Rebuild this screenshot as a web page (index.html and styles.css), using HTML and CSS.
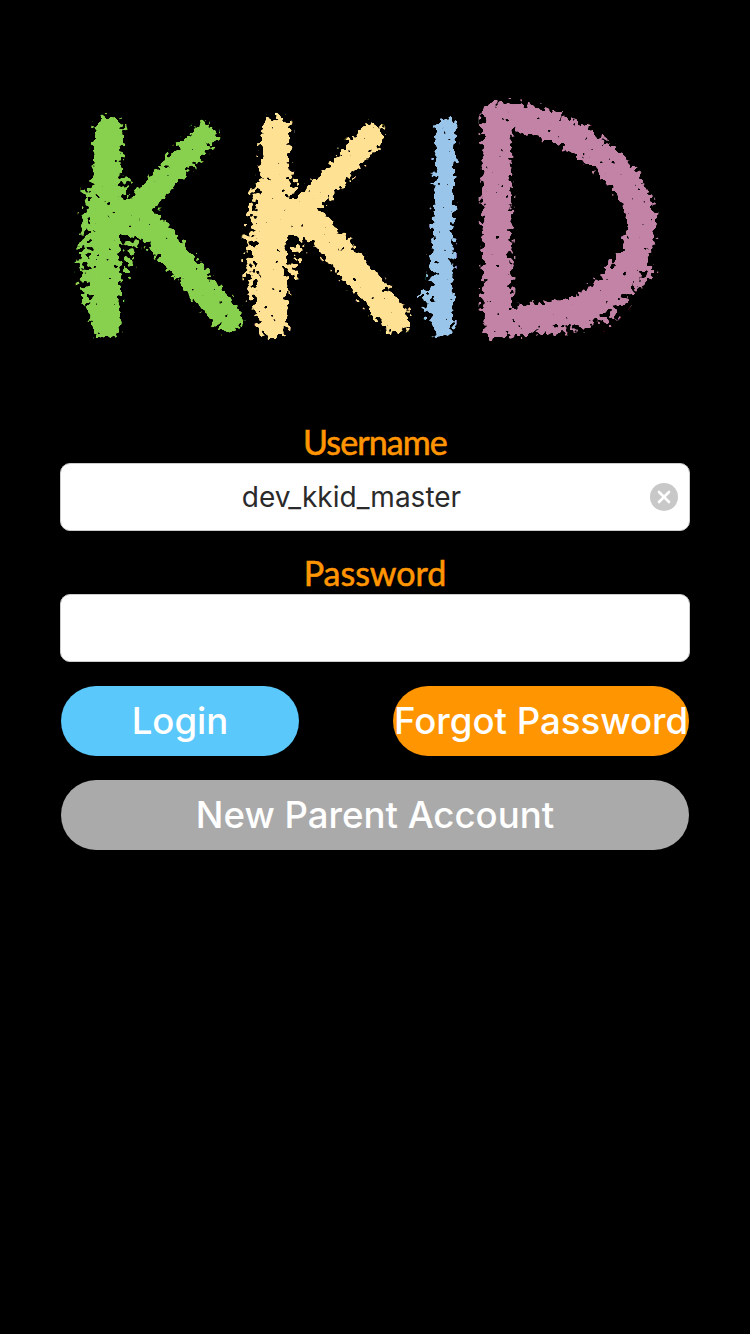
FILE: index.html
```html
<!DOCTYPE html>
<html lang="en">
<head>
<meta charset="utf-8">
<title>KKID Login</title>
<link rel="stylesheet" href="styles.css">
</head>
<body>
<main class="screen">
  <svg class="logo" viewBox="0 0 750 400" role="img" aria-label="KKID logo">
    <defs>
      <filter id="chalk" x="0" y="0" width="750" height="400" filterUnits="userSpaceOnUse" color-interpolation-filters="sRGB">
        <feGaussianBlur in="SourceGraphic" stdDeviation="2.2" result="soft"/>
        <feTurbulence type="fractalNoise" baseFrequency="0.17" numOctaves="2" seed="7" result="noise"/>
        <feColorMatrix in="noise" type="matrix" values="0 0 0 0 0 0 0 0 0 0 0 0 0 0 0 1.4 0 0 0 0" result="noiseAlpha"/>
        <feComposite in="soft" in2="noiseAlpha" operator="arithmetic" k1="0" k2="1" k3="1.6" k4="-1.02" result="sum"/>
        <feComponentTransfer in="sum" result="mask">
          <feFuncA type="linear" slope="10" intercept="-4.4"/>
        </feComponentTransfer>
        <feComponentTransfer in="soft" result="solid">
          <feFuncA type="linear" slope="60" intercept="0"/>
        </feComponentTransfer>
        <feComposite in="solid" in2="mask" operator="in"/>
      </filter>
      <g id="letter-k">
        <path class="fringe" d="M94 190 L87 250 L90 295 L104 325"/>
        <path class="fringe-thin" d="M124 180 L124 205"/>
        <path class="fringe-thin" d="M136 232 L126 272"/>
        <path class="stem" d="M109 131 L105 230 L106 324"/>
        <path class="arm" d="M112 222 L138 208 L204 136"/>
        <path class="arm arm-low" d="M125 222 L150 226 L228 318"/>
      </g>
    </defs>
    <g class="chalk" filter="url(#chalk)">
      <use class="letter k-green" href="#letter-k"/>
      <use class="letter k-yellow" href="#letter-k" transform="translate(167 0)"/>
      <g class="letter i-blue">
        <path class="fringe-thin" d="M436 240 L434 320"/>
        <path class="fringe-thin" d="M425 292 L429 312"/>
        <path class="thin" d="M446 128 L443 230 L443 328"/>
      </g>
      <g class="letter d-pink">
        <path class="fringe" d="M645 270 L602 318"/>
        <path class="fringe-thin" d="M540 331 L590 322"/>
        <path class="stem" d="M510 322 L497 324 L497 116 C555 116 600 150 622 177 C636 195 641 210 641 225 C641 240 638 250 631 260 C618 280 603 297 585 306 C563 316 535 318 510 322 Z"/>
      </g>
    </g>
  </svg>

  <form class="login">
    <label class="caption">Username</label>
    <div class="field">
      <span class="field-value">dev_kkid_master</span>
      <svg class="clear" viewBox="0 0 28 28" aria-hidden="true">
        <circle class="clear-disc" cx="14" cy="14" r="14"/>
        <path class="clear-x" d="M9 9 L19 19 M19 9 L9 19"/>
      </svg>
    </div>
    <label class="caption caption-second">Password</label>
    <div class="field"></div>
    <div class="actions">
      <button type="button" class="pill pill-login">Login</button>
      <button type="button" class="pill pill-forgot">Forgot Password</button>
    </div>
    <button type="button" class="pill pill-new">New Parent Account</button>
  </form>
</main>
</body>
</html>
```
FILE: styles.css
```css
* {
  box-sizing: border-box;
}

html,
body {
  margin: 0;
  background: #000;
}

.screen {
  width: 750px;
  height: 1334px;
  overflow: hidden;
  background: #000;
}

.logo {
  display: block;
  width: 750px;
  height: 400px;
}

.letter {
  fill: none;
  stroke-linecap: round;
  stroke-linejoin: round;
}

.stem {
  stroke-width: 27;
}

.arm {
  stroke-width: 23;
}

.arm-low {
  stroke-width: 27;
}

.thin {
  stroke-width: 18;
}

.fringe {
  stroke-width: 18;
  stroke-opacity: 0.5;
}

.fringe-thin {
  stroke-width: 9;
  stroke-opacity: 0.5;
}

.k-green { stroke: #88d14f; }
.k-yellow { stroke: #ffe194; }
.i-blue { stroke: #9ac5ea; }
.d-pink { stroke: #c283a6; }

.login {
  display: flex;
  flex-direction: column;
  margin: 0;
  padding: 24px 60px 0;
}

.caption {
  display: block;
  height: 39px;
  font-family: "Lato", sans-serif;
  font-size: 34px;
  line-height: 36px;
  letter-spacing: -0.9px;
  text-align: center;
  color: #ff9500;
  -webkit-text-stroke: 0.6px #ff9500;
}

.caption-second {
  margin-top: 24px;
  letter-spacing: 0;
}

.field {
  display: flex;
  align-items: center;
  gap: 8px;
  height: 68px;
  padding-right: 11px;
  border: 1px solid #ccc;
  border-radius: 10px;
  background: #fff;
}

.field-value {
  flex: 1;
  text-align: center;
  font-family: "Inter", sans-serif;
  font-size: 28px;
  color: #2a2a2a;
}

.clear {
  flex: none;
  width: 28px;
  height: 28px;
}

.clear-disc {
  fill: #c8c8c8;
}

.clear-x {
  fill: none;
  stroke: #fff;
  stroke-width: 2.6;
  stroke-linecap: round;
}

.actions {
  display: flex;
  justify-content: space-between;
  margin-top: 24px;
  padding: 0 1px;
}

.pill {
  display: block;
  height: 70px;
  padding: 0;
  border: 0;
  border-radius: 35px;
  font-family: "Inter", sans-serif;
  font-size: 36.6px;
  font-weight: 500;
  white-space: nowrap;
  color: #fff;
}

.pill-login {
  width: 238px;
  background: #5ac8fa;
}

.pill-forgot {
  width: 296px;
  background: #ff9500;
}

.pill-new {
  width: 628px;
  margin: 24px 1px 0;
  background: #aaa;
}
```
